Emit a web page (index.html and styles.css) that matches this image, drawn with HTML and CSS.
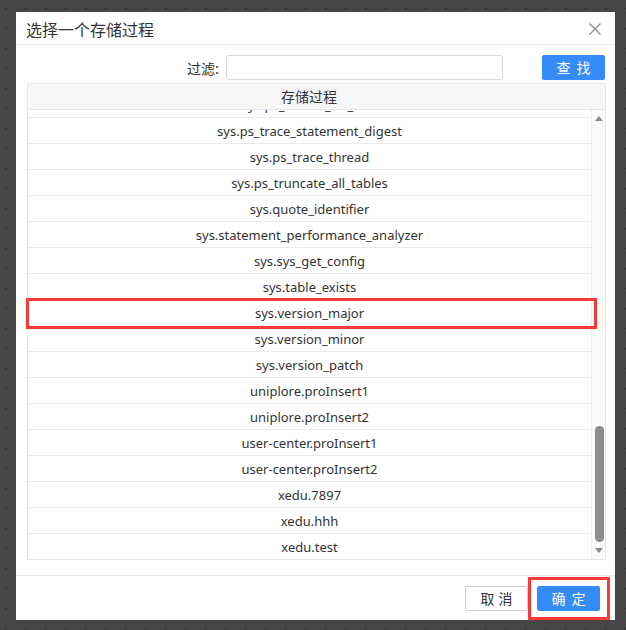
FILE: index.html
```html
<!DOCTYPE html>
<html lang="zh-CN">
<head>
<meta charset="utf-8">
<title>选择一个存储过程</title>
<link rel="stylesheet" href="styles.css">
</head>
<body>
<div class="dialog">
  <div class="dlg-head">
    <span class="dlg-title">选择一个存储过程</span>
    <svg class="dlg-close" width="12" height="12" viewBox="0 0 12 12"><path d="M0.5 0.5 L11.5 11.5 M11.5 0.5 L0.5 11.5" stroke="#8a8a8a" stroke-width="1.3" fill="none"/></svg>
  </div>
  <div class="dlg-body">
    <div class="filter">
      <label class="filter-label">过滤:</label>
      <input class="filter-input" type="text">
      <button class="btn btn-primary btn-search">查找</button>
    </div>
    <div class="grid">
      <div class="grid-head">存储过程</div>
      <div class="grid-body">
        <div class="rows-view">
          <div class="rows">
            <div class="row">sys.ps_thread_trx_info</div>
            <div class="row">sys.ps_trace_statement_digest</div>
            <div class="row">sys.ps_trace_thread</div>
            <div class="row">sys.ps_truncate_all_tables</div>
            <div class="row">sys.quote_identifier</div>
            <div class="row">sys.statement_performance_analyzer</div>
            <div class="row">sys.sys_get_config</div>
            <div class="row">sys.table_exists</div>
            <div class="row">sys.version_major</div>
            <div class="row">sys.version_minor</div>
            <div class="row">sys.version_patch</div>
            <div class="row">uniplore.proInsert1</div>
            <div class="row">uniplore.proInsert2</div>
            <div class="row">user-center.proInsert1</div>
            <div class="row">user-center.proInsert2</div>
            <div class="row">xedu.7897</div>
            <div class="row">xedu.hhh</div>
            <div class="row">xedu.test</div>
          </div>
        </div>
        <div class="scrollbar">
          <span class="arrow arrow-up"></span>
          <span class="thumb"></span>
          <span class="arrow arrow-down"></span>
        </div>
      </div>
    </div>
  </div>
  <div class="dlg-foot">
    <button class="btn btn-default">取消</button>
    <button class="btn btn-primary">确定</button>
  </div>
</div>
<div class="mark mark-row"></div>
<div class="mark mark-ok"></div>
</body>
</html>
```

FILE: styles.css
```css
html, body {
  margin: 0;
  padding: 0;
}
body {
  position: relative;
  width: 626px;
  height: 630px;
  overflow: hidden;
  background-color: #464646;
  background-image: radial-gradient(circle at 0.5px 0.5px, #2c2c2c 0.9px, transparent 1.1px);
  background-size: 20px 20px;
  background-position: 5px 8px;
  font-family: "Noto Sans", "Noto Sans CJK SC", sans-serif;
  color: #333;
}
.dialog {
  margin: 12px 0 0 16px;
  width: 599px;
  height: 608px;
  background: #fff;
  display: flex;
  flex-direction: column;
  box-sizing: border-box;
}
.dlg-head {
  height: 32px;
  border-bottom: 1px solid #e8e8e8;
  display: flex;
  align-items: center;
  justify-content: space-between;
  padding: 0 14px 0 10px;
  flex-shrink: 0;
}
.dlg-title {
  font-family: "Noto Sans CJK SC", sans-serif;
  font-size: 16px;
  color: #333;
  line-height: 20px;
  margin-top: 1px;
}
.dlg-close {
  display: block;
  margin-top: 1px;
}
.dlg-body {
  padding: 10px 9px 15px 11px;
  flex: 1;
  display: flex;
  flex-direction: column;
}
.filter {
  display: flex;
  align-items: center;
  justify-content: flex-end;
  height: 25px;
}
.filter-label {
  font-family: "Noto Sans CJK SC", sans-serif;
  font-size: 14px;
  color: #333;
  margin-right: 7px;
}
.filter-input {
  width: 277px;
  height: 25px;
  box-sizing: border-box;
  border: 1px solid #d9d9d9;
  border-radius: 3px;
  margin: 0 39px 0 0;
  padding: 0 6px;
  outline: none;
}
.btn {
  height: 25px;
  width: 63px;
  box-sizing: border-box;
  border-radius: 2px;
  font-family: "Noto Sans CJK SC", sans-serif;
  font-size: 14px;
  letter-spacing: 6px;
  padding: 0 0 0 6px;
  line-height: 23px;
  cursor: pointer;
}
.btn-primary {
  background: #368cf6;
  border: 1px solid #368cf6;
  color: #fff;
}
.btn-default {
  background: #fff;
  border: 1px solid #d0d0d0;
  color: #333;
  letter-spacing: 4px;
  padding-left: 4px;
}
.btn-search {
  margin-right: 1px;
}
.grid {
  margin-top: 3px;
  border: 1px solid #e6e6e6;
  display: flex;
  flex-direction: column;
}
.grid-head {
  height: 25px;
  border-bottom: 1px solid #e6e6e6;
  background: #f7f7f7;
  font-family: "Noto Sans CJK SC", sans-serif;
  font-size: 14px;
  line-height: 25px;
  text-align: center;
  color: #333;
  padding-right: 15px;
}
.grid-body {
  height: 449px;
  display: flex;
}
.rows-view {
  flex: 1;
  overflow: hidden;
}
.rows {
  margin-top: -18px;
}
.row {
  height: 23px;
  padding-top: 2px;
  border-bottom: 1px solid #ebebeb;
  line-height: 23px;
  text-align: center;
  font-size: 13px;
  color: #333;
  white-space: nowrap;
}
.scrollbar {
  width: 14px;
  border-left: 1px solid #ececec;
  background: #fafafa;
  display: flex;
  flex-direction: column;
  align-items: center;
  padding: 6px 0;
  box-sizing: border-box;
}
.arrow {
  width: 0;
  height: 0;
  border-left: 4.5px solid transparent;
  border-right: 4.5px solid transparent;
  margin-left: 1px;
}
.arrow-up {
  border-bottom: 5px solid #8a8a8a;
}
.arrow-down {
  border-top: 5px solid #8a8a8a;
  margin-top: auto;
}
.thumb {
  width: 9px;
  height: 116px;
  border-radius: 5px;
  background: #8c8c8c;
  margin-top: 305px;
  margin-left: 1px;
}
.dlg-foot {
  border-top: 1px solid #e8e8e8;
  padding: 10px 15px 9px;
  display: flex;
  justify-content: flex-end;
  gap: 9px;
  flex-shrink: 0;
}
.mark {
  position: absolute;
  border: 3px solid #f83a3a;
  box-sizing: border-box;
}
.mark-row {
  left: 26px;
  top: 298px;
  width: 571px;
  height: 31px;
}
.mark-ok {
  left: 528px;
  top: 577px;
  width: 82px;
  height: 43px;
}
```
